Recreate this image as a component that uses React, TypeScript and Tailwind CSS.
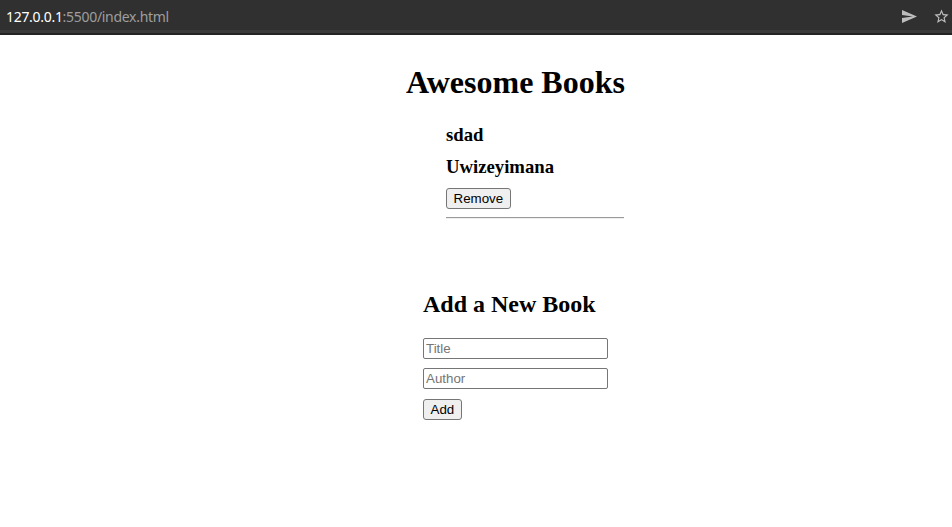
import React from "react";

const serif = { fontFamily: '"Liberation Serif", "Times New Roman", serif' };
const sans = { fontFamily: '"Liberation Sans", Arial, sans-serif' };

function SendIcon() {
  return (
    <svg width="15" height="13" viewBox="2 3 21 18" fill="#bdbdbd">
      <path d="M2.01 21L23 12 2.01 3 2 10l15 2-15 2z" />
    </svg>
  );
}

function StarIcon() {
  return (
    <svg width="17" height="17" viewBox="0 0 24 24" fill="#bdbdbd">
      <path d="M22 9.24l-7.19-.62L12 2 9.19 8.63 2 9.24l5.46 4.73L5.82 21 12 17.27 18.18 21l-1.63-7.03L22 9.24zM12 15.4l-3.76 2.27 1-4.28-3.32-2.88 4.38-.38L12 6.1l1.71 4.04 4.38.38-3.32 2.88 1 4.28L12 15.4z" />
    </svg>
  );
}

export default function App() {
  return (
    <div className="min-h-[527px] w-full bg-white text-black">
      <div className="flex flex-col">
        <div className="flex h-[30px] items-center justify-between bg-[#303030] pl-[6px] pr-[2px] pt-[3px]">
          <div
            className="text-[14px] leading-[16px] tracking-[-0.3px]"
            style={{ fontFamily: '"Noto Sans", "DejaVu Sans", sans-serif' }}
          >
            <span className="text-white">127.0.0.1</span>
            <span className="text-[#9e9e9e]">:5500/index.html</span>
          </div>
          <div className="flex items-center gap-[16px]">
            <SendIcon />
            <StarIcon />
          </div>
        </div>
        <div className="h-[3px] bg-[#3a3a3a]" />
        <div className="h-[2px] bg-[#232323]" />
      </div>

      <div className="flex flex-col">
        <h1
          className="ml-[406px] mt-[29px] text-[32px] font-bold leading-[37px]"
          style={serif}
        >
          Awesome Books
        </h1>

        <div className="ml-[446px] flex w-[178px] flex-col">
          <h3 className="mt-[23px] text-[18.72px] font-bold leading-[22px]" style={serif}>
            sdad
          </h3>
          <h3 className="mt-[10px] text-[18.72px] font-bold leading-[22px]" style={serif}>
            Uwizeyimana
          </h3>
          <div className="mt-[10px] flex">
            <button
              className="h-[21px] rounded-[3px] border border-[#767676] bg-[#efefef] px-[6.5px] text-[13.33px] leading-[15px] text-black"
              style={sans}
            >
              Remove
            </button>
          </div>
          <div className="mt-[8px] h-[2px] w-[178px] border-t border-b border-t-[#9a9a9a] border-b-[#eeeeee]" />
        </div>

        <div className="ml-[423px] flex flex-col">
          <h2 className="mt-[71px] text-[24px] font-bold leading-[28px]" style={serif}>
            Add a New Book
          </h2>
          <input
            placeholder="Title"
            className="mt-[20px] h-[21px] w-[185px] rounded-[2px] border border-[#767676] px-[2px] text-[13.33px] placeholder:text-[#757575]"
            style={sans}
          />
          <input
            placeholder="Author"
            className="mt-[9px] h-[21px] w-[185px] rounded-[2px] border border-[#767676] px-[2px] text-[13.33px] placeholder:text-[#757575]"
            style={sans}
          />
          <div className="mt-[10px] flex">
            <button
              className="h-[21px] rounded-[3px] border border-[#767676] bg-[#efefef] px-[6.5px] text-[13.33px] leading-[15px] text-black"
              style={sans}
            >
              Add
            </button>
          </div>
        </div>
      </div>
    </div>
  );
}
